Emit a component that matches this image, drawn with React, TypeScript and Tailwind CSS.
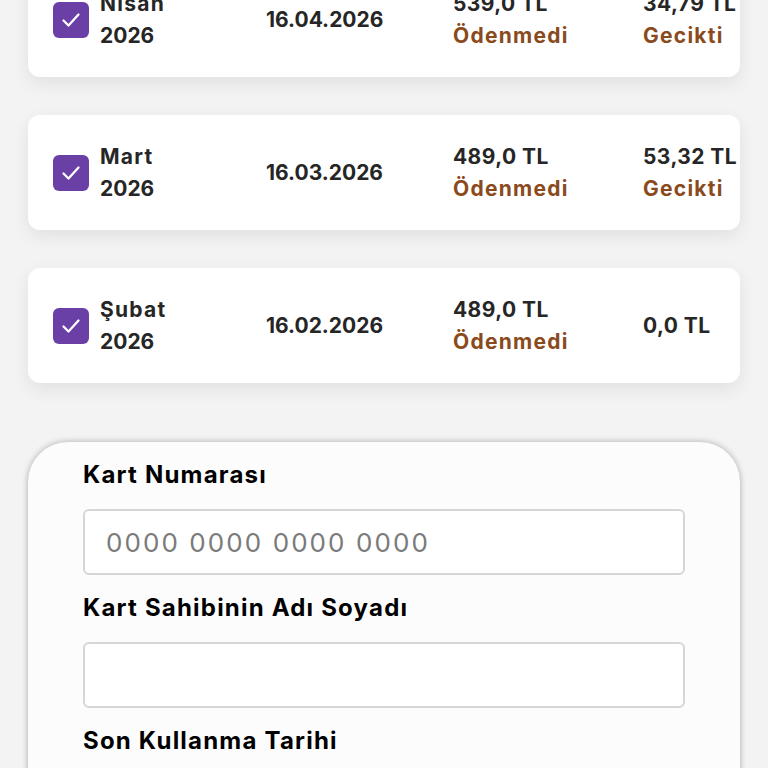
import React from "react";

interface Installment {
  month: string;
  year: string;
  date: string;
  amount: string;
  status: string;
  fee: string;
  feeStatus?: string;
}

const rows: Installment[] = [
  { month: "Nisan", year: "2026", date: "16.04.2026", amount: "539,0 TL", status: "Ödenmedi", fee: "34,79 TL", feeStatus: "Gecikti" },
  { month: "Mart", year: "2026", date: "16.03.2026", amount: "489,0 TL", status: "Ödenmedi", fee: "53,32 TL", feeStatus: "Gecikti" },
  { month: "Şubat", year: "2026", date: "16.02.2026", amount: "489,0 TL", status: "Ödenmedi", fee: "0,0 TL" },
];

function Check() {
  return (
    <div className="w-9 h-9 shrink-0 rounded-md bg-[#6a3fa6] flex items-center justify-center">
      <svg width="24" height="24" viewBox="0 0 24 24" fill="none" stroke="white" strokeWidth="2.3" strokeLinecap="round" strokeLinejoin="round">
        <path d="M4.5 12.5l5 5L19.5 6.5" />
      </svg>
    </div>
  );
}

function Row({ row }: { row: Installment }) {
  return (
    <div className="h-[115px] bg-white rounded-xl shadow-[0_6px_18px_rgba(0,0,0,0.08)] flex items-center pl-[25px] text-[21px] leading-[32px] font-bold text-[#262626]">
      <Check />
      <div className="ml-[11px] w-[166px]">
        <div className="tracking-[0.06em]">{row.month}</div>
        <div>{row.year}</div>
      </div>
      <div className="w-[187px]">{row.date}</div>
      <div className="w-[190px]">
        <div className="tracking-[0.02em]">{row.amount}</div>
        <div className="text-[#8a4a1c] tracking-[0.06em]">{row.status}</div>
      </div>
      <div>
        <div className="tracking-[0.02em]">{row.fee}</div>
        {row.feeStatus && <div className="text-[#8a4a1c] tracking-[0.06em]">{row.feeStatus}</div>}
      </div>
    </div>
  );
}

function Field({ label, placeholder }: { label: string; placeholder?: string }) {
  return (
    <div>
      <div className="h-[34px] leading-[34px] text-[24px] font-bold text-black tracking-[0.05em]">{label}</div>
      <div className="mt-[17px] mb-4 h-[66px] rounded-md border-2 border-[#d6d6d6] bg-white flex items-center px-[21px] text-[26px] text-[#7a7a7a] tracking-[0.08em]">
        {placeholder}
      </div>
    </div>
  );
}

export default function App() {
  return (
    <div
      className="w-[768px] h-[768px] overflow-hidden bg-[#f3f3f3]"
      style={{ fontFamily: "Inter, 'Noto Sans', sans-serif" }}
    >
      <div className="-mt-[38px] px-[28px] flex flex-col gap-[38px]">
        {rows.map((r) => (
          <Row key={r.date} row={r} />
        ))}
      </div>
      <div className="mt-[59px] mx-[28px] rounded-t-[40px] bg-[#fcfcfc] shadow-[0_0_6px_rgba(0,0,0,0.3)] pt-4 px-[55px] h-[400px]">
        <Field label="Kart Numarası" placeholder="0000 0000 0000 0000" />
        <Field label="Kart Sahibinin Adı Soyadı" />
        <Field label="Son Kullanma Tarihi" />
      </div>
    </div>
  );
}
